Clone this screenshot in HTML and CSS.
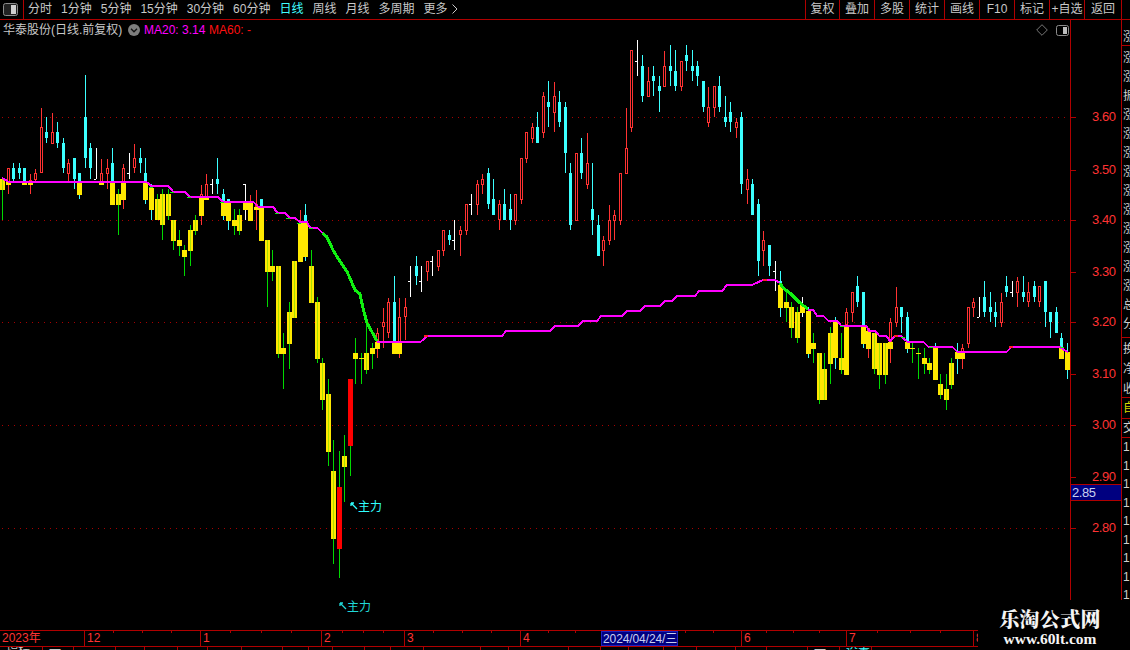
FILE: index.html
```html
<!DOCTYPE html>
<html lang="zh">
<head>
<meta charset="utf-8">
<title>华泰股份 日线</title>
<link rel="stylesheet" href="styles.css">
</head>
<body>
<div class="page">
  <header class="toolbar">
    <div class="layout-btn">
      <svg class="win-icon" viewBox="0 0 15 13" width="15" height="13"><rect x="0.5" y="0.5" width="14" height="12" rx="2" fill="#222" stroke="#8c8c8c"/><rect x="8" y="2" width="5" height="9" fill="#cfcfcf"/></svg>
    </div>
    <nav class="periods">
      <span>分时</span><span>1分钟</span><span>5分钟</span><span>15分钟</span><span>30分钟</span><span>60分钟</span>
      <span class="on">日线</span><span>周线</span><span>月线</span><span>多周期</span><span>更多<svg class="more-arrow" viewBox="0 0 6 10" width="6" height="10"><path d="M0.5 0.5 L5 5 L0.5 9.5" fill="none" stroke="#c8c8c8"/></svg></span>
    </nav>
    <div class="actions">
      <span>复权</span><span>叠加</span><span>多股</span><span>统计</span><span>画线</span><span>F10</span><span>标记</span><span>+自选</span><span>返回</span>
    </div>
    <div class="corner"></div>
  </header>

  <main class="workspace">
    <section class="chart" id="chart">
      <svg id="plot" class="plot" viewBox="0 20 1070 610" width="1070" height="610"></svg>
      <div class="legend">
        <span class="stock">华泰股份(日线.前复权)</span>
        <svg class="chev" viewBox="0 0 12 12" width="12" height="12"><circle cx="6" cy="6" r="6" fill="#7d7d7d"/><path d="M3 4.8 L6 7.8 L9 4.8" fill="none" stroke="#111" stroke-width="1.3"/></svg>
        <span class="ma20">MA20: 3.14</span>
        <span class="ma60">MA60: -</span>
      </div>
      <div class="chart-tools">
        <svg viewBox="0 0 12 12" width="12" height="12"><path d="M6 0.7 L11.3 6 L6 11.3 L0.7 6 Z" fill="none" stroke="#777"/></svg>
        <svg viewBox="0 0 13 11" width="13" height="11"><rect x="0.5" y="0.5" width="12" height="10" rx="2" fill="none" stroke="#8c8c8c"/><rect x="7" y="2" width="4" height="7" fill="#bdbdbd"/></svg>
      </div>
      <div class="tag tag-a"><svg viewBox="0 0 8 8" width="8" height="8"><path d="M1 1 L7 7 M1 1 L1 4 M1 1 L4 1" fill="none" stroke="#30ffff" stroke-width="1.3"/></svg>主力</div>
      <div class="tag tag-b"><svg viewBox="0 0 8 8" width="8" height="8"><path d="M1 1 L7 7 M1 1 L1 4 M1 1 L4 1" fill="none" stroke="#20d8d8" stroke-width="1.3"/></svg>主力</div>
    </section>
    <aside class="price-axis" id="axis">
      <div class="now-price">2.85</div>
    </aside>
    <aside class="quote">
      <div class="q-group q-top"><b>涨</b></div>
      <div class="q-group q-main"><b>涨</b><b>涨</b><b>振</b><b>涨</b><b>涨</b><b>涨</b><b>涨</b><b>涨</b><b>涨</b><b>涨</b><b>涨</b><b>涨</b><b>涨</b><b>总</b><b>分</b></div>
      <div class="q-group q-third"><b>换</b><b>净</b><b>收</b></div>
      <div class="q-group q-self"><b>自</b></div>
      <div class="q-group q-trade"><b>交</b></div>
      <div class="q-group q-nums"><b>1</b><b>1</b><b>1</b><b>1</b><b>1</b><b>1</b><b>1</b><b>1</b><b>1</b></div>
    </aside>
  </main>

  <footer class="time-axis" id="time">
    <span>2023年</span><span>12</span><span>1</span><span>2</span><span>3</span><span>4</span><span class="cursor-date">2024/04/24/三</span><span class="blank"></span><span>6</span><span>7</span><span>8</span>
  </footer>
  <div class="sub-row">
    <i class="first">指标</i><i>一</i><i></i><i></i><i></i><i></i><i></i><i></i><i></i><i></i><i></i><i></i><i></i><i></i><i></i><i></i><i></i><i></i><i></i><i></i><i></i><i></i><i></i><i class="txt">一</i><i class="cy">设置</i><i></i>
  </div>

  <div class="watermark">
    <strong>乐淘公式网</strong>
    <em>www.60lt.com</em>
  </div>
</div>
<script src="script.js"></script>
</body>
</html>
```
FILE: styles.css
```css
* { box-sizing: border-box; }
html, body { margin: 0; padding: 0; background: #000; }
body {
  width: 1130px; height: 650px; overflow: hidden;
  font-family: "Liberation Sans", "Noto Sans CJK SC", sans-serif;
  font-size: 12px; color: #c8c8c8;
}
.page { position: relative; width: 1130px; height: 650px; display: flex; flex-direction: column; background: #000; }

.toolbar { height: 20px; display: flex; border-bottom: 1px solid #b00000; flex: none; line-height: 19px; }
.layout-btn { width: 24px; border-right: 1px solid #b00000; display: flex; align-items: center; justify-content: center; padding-right: 2px; }
.periods { display: flex; gap: 9px; padding-left: 4px; font-size: 12px; white-space: nowrap; }
.periods .on { color: #40ffff; }
.more-arrow { margin-left: 4px; vertical-align: -1px; }
.actions { margin-left: auto; display: grid; grid-template-columns: 34px 35px 35px 35px 35px 35px 35px 35px 37px; }
.actions span { border-left: 1px solid #b00000; text-align: center; white-space: nowrap; overflow: hidden; }
.corner { width: 9px; border-left: 1px solid #b00000; }

.workspace { flex: none; height: 610px; display: flex; }
.chart { position: relative; width: 1070px; height: 610px; }
.plot { display: block; }
.legend { position: absolute; left: 3px; top: 1px; height: 18px; line-height: 18px; display: flex; align-items: center; white-space: nowrap; }
.stock { width: 125px; }
.chev { margin-left: 0; }
.ma20 { color: #ff00ff; margin-left: 4px; width: 65px; }
.ma60 { color: #ff1010; }
.chart-tools { position: absolute; left: 1036px; top: 4px; display: flex; gap: 8px; align-items: center; }

.tag { position: absolute; display: flex; align-items: center; gap: 0; line-height: 14px; color: #30ffff; }
.tag svg { margin-bottom: 2px; }
.tag-a { left: 350px; top: 480px; }
.tag-b { left: 339px; top: 580px; color: #20d8d8; }

.price-axis { position: relative; width: 51px; height: 610px; border-left: 1px solid #b00000; }
.tick { position: absolute; left: 0; width: 5px; height: 1px; background: #b00000; }
.price { position: absolute; left: 21px; height: 14px; line-height: 14px; color: #ff3333; font-size: 13px; letter-spacing: -0.4px; }
.now-price { position: absolute; left: 0; right: 0; top: 464px; height: 17px; background: #000080; border-top: 1px solid #b00000; border-bottom: 1px solid #b00000; color: #c8d0f0; line-height: 15px; font-size: 13px; padding-left: 1px; letter-spacing: -0.4px; }

.quote { width: 9px; height: 610px; border-left: 1px solid #b00000; overflow: hidden; display: flex; flex-direction: column; }
.quote b { display: block; font-weight: 400; padding-left: 1px; white-space: nowrap; color: #cfcfcf; flex: none; }
.q-group { display: flex; flex-direction: column; border-bottom: 1px solid #b00000; flex: none; overflow: hidden; width: 8px; }
.q-top { height: 26px; padding-top: 8px; }
.q-top b { line-height: 18px; }
.q-main { height: 292px; padding-top: 3px; }
.q-main b { height: 19px; line-height: 19px; }
.q-third { height: 60px; padding-top: 1px; }
.q-third b { height: 20px; line-height: 20px; }
.q-self { height: 21px; }
.q-self b { color: #d8d800; line-height: 20px; }
.q-trade { height: 19px; }
.q-trade b { line-height: 18px; }
.q-nums { border-bottom: 0; padding-top: 0; }
.q-nums b { height: 18.5px; line-height: 18.5px; }

.time-axis { flex: none; width: 978px; height: 17px; border-top: 1px solid #b00000; border-bottom: 1px solid #b00000; display: grid; grid-template-columns: 84px 116px 121px 83px 116px 81px 77px 63px 105px 127px 5px; position: relative; color: #ff3333; line-height: 15px; }
.time-axis span { padding-left: 2px; border-left: 1px solid #b00000; white-space: nowrap; overflow: hidden; }
.time-axis span:first-child { border-left: 0; }
.time-axis .cursor-date { background: #000080; color: #c8d0f0; border: 1px solid #2020c0; padding-left: 1px; letter-spacing: -0.1px; }
.time-axis .blank { padding: 0; border-left: 0; }
.tick-x { position: absolute; top: 0; width: 1px; height: 2px; background: #b00000; }

.sub-row { flex: 1; width: 978px; display: grid; grid-template-columns: 42px 31px 42px 29px 33px 30px 34px 41px 26px 24px 32px 26px 33px 57px 28px 60px 32px 28px 35px 33px 39px 31px 41px 32px 32px 107px; overflow: hidden; }
.sub-row i { border-left: 1px solid #b00000; font-style: normal; font-size: 12px; line-height: 9px; color: #c8c8c8; white-space: nowrap; overflow: hidden; padding-left: 6px; }
.sub-row .first { border-left: 0; }
.sub-row .cy { color: #40ffff; }

.watermark { position: absolute; left: 978px; top: 600px; width: 152px; height: 50px; background: #000; display: flex; flex-direction: column; align-items: center; color: #f4f4f4; padding-top: 10px; padding-right: 8px; font-family: "Liberation Serif", "Noto Serif CJK SC", "Noto Sans CJK SC", serif; font-weight: 700; }
.watermark strong { font-size: 20px; line-height: 20px; letter-spacing: 0.3px; }
.watermark em { font-style: normal; font-size: 15.5px; line-height: 17px; margin-top: 0; }
```
FILE: script.js
```js
// [kind, high, low, bodyTop, bodyBottom, yellowTop, yellowBottom]
// kinds: c cyan falling, r hollow red rising, w white doji, Y yellow/green, P plain yellow, R solid red
var D = [
['Y',179,220,179,190],['r',168,194,168,182,182,185],['c',163,182,168,179],['c',163,179,168,173],['c',168,182,168,182,182,185],
['r',174,194,180,182,182,185],['r',169,183,173,180,182,183],['r',108,173,127,173],['c',117,143,132,138],['r',113,144,132,144],
['c',122,148,132,143],['c',138,173,143,168],['r',159,183,163,174],['c',158,189,158,179],['c',173,199,173,182,182,195],
['c',75,168,117,158],['c',143,179,148,168],['w',148,179,179],['r',159,182,173,182,182,185],['r',159,189,168,174],
['c',148,182,163,182,182,205],['Y',189,235,194,205],['r',164,209,168,182,182,200],['w',153,179,173],['r',144,173,158,168],
['c',148,173,158,163],['c',158,204,173,182,182,200],['P',184,220,188,210],['Y',194,220,199,220],['Y',189,240,194,225],
['Y',189,220,194,216],['Y',220,250,220,241],['Y',230,256,240,246],['Y',245,276,250,257],['Y',225,266,230,251],
['Y',215,235,220,231],['r',185,225,194,197,197,216],['r',174,200,184,197,197,200],['w',179,194,184],['c',158,194,179,184],
['c',189,220,194,202,202,216],['c',199,230,199,202,202,221],['Y',209,235,220,226],['Y',209,235,215,231],['w',184,220,184,184,202,210],
['r',195,221,202,202,202,221],['r',190,230,204,207,207,210],['c',199,241,199,207,207,241],['Y',240,307,240,272],['Y',250,281,266,272],
['Y',266,358,266,354],['Y',333,389,348,354],['Y',302,369,312,344],['Y',261,318,261,318],['r',210,223,223,223,223,262],
['c',204,261,215,223,223,257],['Y',250,303,266,303],['Y',297,363,302,359],['Y',358,410,363,400],['Y',379,466,394,452],
['Y',440,564,471,539],['R',451,578,487,549],['Y',435,502,456,467],['R',379,476,379,446],['Y',338,384,353,359],
['Y',353,384,358,359],['Y',322,374,353,370],['Y',343,369,348,354],['r',328,358,333,343,342,349],['r',308,348,322,327],
['r',298,338,302,333],['c',276,342,302,342,342,354],['r',298,358,317,342,342,354],['r',298,340,307,317],['w',266,297,281],
['c',256,285,266,276],['w',266,292,281],['r',261,281,261,272],['w',256,276,261],['r',250,271,250,267],
['r',230,256,230,251],['c',230,245,235,240],['w',220,250,240],['r',226,256,230,235],['r',204,235,204,231],
['w',194,215,204],['r',180,215,184,205],['r',174,194,179,185],['c',168,209,173,204],['c',179,215,199,215],
['r',200,230,204,220],['c',189,220,204,220],['c',194,230,209,220],['r',194,225,194,221],['r',158,204,158,200],
['r',132,163,132,159],['r',123,143,127,139],['c',112,143,127,143],['r',92,138,96,133],['c',81,127,102,107],
['r',82,132,96,113],['c',91,127,102,122],['c',102,173,107,153],['c',163,230,173,225],['r',153,221,153,221],
['c',138,179,153,173],['r',133,189,163,185],['c',163,235,209,220],['c',215,256,225,256],['r',236,266,240,251],
['r',205,245,220,241],['r',210,240,215,221],['r',173,225,173,221],['r',108,174,148,174],['r',50,132,50,128],
['w',40,76,61],['c',55,102,66,96],['r',67,97,81,97],['c',66,96,76,81],['c',76,112,86,91],
['r',51,87,66,87],['c',45,86,66,71],['c',50,91,71,86],['r',61,91,61,87],['c',45,71,55,61],
['c',50,81,66,71],['c',61,86,66,76],['c',81,112,81,107],['r',87,127,107,123],['r',86,117,86,108],
['c',76,112,86,107],['c',96,127,117,122],['c',102,132,112,122],['r',118,138,122,128],['c',112,194,117,184],
['r',169,204,179,190],['c',179,215,184,215],['c',199,276,204,261],['r',231,266,240,251],['c',245,276,245,266],
['w',261,291,271],['c',271,317,281,285,285,308],['Y',291,322,302,308],['Y',302,338,307,328],['Y',307,343,312,338],
['w',297,317,305,305,305,313],['c',307,358,311,311,311,354],['Y',333,363,343,349],['Y',353,404,353,400],['Y',353,400,369,400],
['Y',327,384,333,364],['c',317,369,321,321,321,358],['Y',333,374,358,370],['r',308,326,312,325,326,375],['r',292,322,292,313],
['c',276,307,286,302],['c',292,348,292,325,326,344],['r',328,358,328,331,331,349],['Y',333,374,333,369],['Y',343,389,343,375],
['Y',343,384,343,375],['r',318,363,322,342,342,349],['r',287,327,307,323],['c',307,333,307,317],['c',312,353,317,342,342,349],
['Y',343,363,348,349],['Y',348,379,353,354],['Y',348,374,358,364],['Y',358,374,363,370],['c',343,380,347,347,347,380],
['Y',374,399,384,395],['Y',374,410,389,400],['Y',358,389,363,385],['c',343,374,352,352,352,359],['r',344,369,348,352,352,359],
['r',307,348,307,344],['r',298,317,302,308],['w',297,317,317],['c',281,317,297,312],['c',292,322,307,312],
['c',302,327,312,317],['r',293,327,302,323],['c',276,297,286,292],['w',281,297,292],['r',277,307,281,293],
['c',276,302,292,297],['r',282,307,292,302],['c',281,302,286,297],['r',286,307,286,302],['c',281,327,281,312],
['c',312,338,312,322],['c',307,333,312,333],['c',333,347,338,347,347,359],['c',343,379,352,352,352,370]
];
var COL = { c:'#3cffff', r:'#ff3232', w:'#ffffff', Y:'#00d800', P:'#3cffff', R:'#00d800' };
var YEL = '#ffe800', STRIPE = '#a8e000';
var NS = 'http://www.w3.org/2000/svg';
var plot = document.getElementById('plot');

function rect(x, y, w, h, fill) {
  var r = document.createElementNS(NS, 'rect');
  r.setAttribute('x', x); r.setAttribute('y', y);
  r.setAttribute('width', w); r.setAttribute('height', h);
  r.setAttribute('fill', fill);
  r.setAttribute('shape-rendering', 'crispEdges');
  plot.appendChild(r);
}
function line(pts, col, w, extra) {
  var p = document.createElementNS(NS, 'polyline');
  p.setAttribute('points', pts.map(function (a) { return a.join(','); }).join(' '));
  p.setAttribute('fill', 'none'); p.setAttribute('stroke', col); p.setAttribute('stroke-width', w);
  p.setAttribute('shape-rendering', 'crispEdges');
  if (extra) p.setAttribute('stroke-dasharray', extra);
  plot.appendChild(p);
}

// dotted price grid
[117, 220, 322, 425, 528].forEach(function (y) {
  for (var x = 2; x < 1070; x += 6) rect(x, y, 1, 1, '#a80000');
});

// candles
D.forEach(function (d, i) {
  var x = Math.floor(2.5 + 5.518 * i), k = d[0], hi = d[1], lo = d[2];
  rect(x, hi, 1, Math.max(1, lo - hi), COL[k]);
  if (k === 'w') {
    rect(x - 2, d[3], 2, 1, '#ffffff');
    if (d[5]) { rect(x - 2, d[5], 5, d[6] - d[5], YEL); }
    return;
  }
  var top = d[3], bot = d[4];
  if (k === 'c' && bot > top) rect(x - 1, top, 3, bot - top, '#3cffff');
  if (k === 'r' && bot > top) {
    rect(x - 1, top, 3, bot - top, '#ff3232');
    if (bot - top > 2) rect(x, top + 1, 1, bot - top - 2, '#000');
  }
  if (k === 'R') rect(x - 2, top, 5, bot - top, '#ff0000');
  if (k === 'Y' || k === 'P') {
    rect(x - 2, top, 5, Math.max(1, bot - top), YEL);
    if (k === 'Y' && bot - top > 10) rect(x, top, 1, bot - top, STRIPE);
  }
  if (d[5] !== undefined) rect(x - 2, d[5], 5, d[6] - d[5], YEL);
});

// moving average
var MA1 = [[2,178],[8,181.5],[146,181.5],[151,186],[168,186],[173,191.5],[184,191.5],[190,196.5],[217,196.5],[223,201.5],[253,201.5],[258,206.5],[273,206.5],[277,212.5],[285,212.5],[290,218],[295,218],[300,222],[307,222],[310,227.5],[317,227.5],[322.5,233]];
var GR1 = [[322.5,233],[327,237],[333,250],[340,261.5],[347,271.5],[355,290],[360,294],[363,308],[367,323],[377,341]];
var MA2 = [[377,341.5],[421,341.5],[427,336],[502,336],[506,331],[550,331],[555,326],[578,326],[583,321],[597,321],[601,316],[622,316],[627,311],[640,311],[645,306],[660,306],[665,301],[672,301],[677,296],[695,296],[699,291],[722,291],[727,285],[752,285],[763,280],[775,280],[780,283]];
var GR2 = [[780,283],[783,288],[790,293],[800,303],[808,309]];
var MA3 = [[808,310],[813,310],[817,315.5],[823,315.5],[828,320.5],[837,320.5],[841,325.5],[866,325.5],[869,330.5],[875,330.5],[879,335.5],[886,335.5],[890,341],[895,336],[901,336],[907,341.5],[923,341.5],[928,346.5],[952,346.5],[957,351.5],[1007,351.5],[1012,346.5],[1059,346.5],[1064,350],[1068,352]];
line(MA1, '#ff00ff', 2);
line(GR1, '#10f010', 3);
line(MA2, '#ff00ff', 2);
line(GR2, '#10f010', 3);
line(MA3, '#ff00ff', 2);
[[149,187],[170,192],[187,197],[220,202],[275,213],[286,218],[297,223],[309,228],[840,326],[901,337],[929,347],[1060,347]].forEach(function (g) {
  rect(g[0], g[1], 4, 1, '#10f010');
});
[[424,335],[763,279],[894,335],[1009,346]].forEach(function (g) {
  rect(g[0], g[1], 4, 2, '#ff2020');
});

// price axis
var axis = document.getElementById('axis');
[['3.60',117],['3.50',170],['3.40',220],['3.30',272],['3.20',322],['3.10',374],['3.00',425],['2.90',477],['2.80',528]].forEach(function (p) {
  var t = document.createElement('i'); t.className = 'tick'; t.style.top = (p[1] - 20) + 'px'; axis.appendChild(t);
  var s = document.createElement('span'); s.className = 'price'; s.textContent = p[0]; s.style.top = (p[1] - 27) + 'px'; axis.appendChild(s);
});

// time axis ticks
var time = document.getElementById('time');
[113,142,171,230,261,291,342,363,383,433,462,491,548,575,685,713,766,793,819,877,910,940].forEach(function (x) {
  var t = document.createElement('i'); t.className = 'tick-x'; t.style.left = x + 'px'; time.appendChild(t);
});
```
